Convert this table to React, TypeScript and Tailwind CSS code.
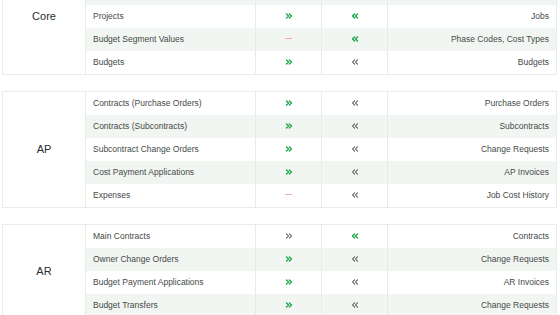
import React from "react";

type Dir = "on" | "off" | "none" | "blank";
type Row = { name: string; to: Dir; from: Dir; target: string };
type Section = { label: string; rows: Row[] };

const sections: Section[] = [
  {
    label: "Core",
    rows: [
      // rows scrolled above the visible area
      { name: "", to: "blank", from: "blank", target: "" },
      { name: "", to: "blank", from: "blank", target: "" },
      { name: "Projects", to: "on", from: "on", target: "Jobs" },
      { name: "Budget Segment Values", to: "none", from: "on", target: "Phase Codes, Cost Types" },
      { name: "Budgets", to: "on", from: "off", target: "Budgets" },
    ],
  },
  {
    label: "AP",
    rows: [
      { name: "Contracts (Purchase Orders)", to: "on", from: "off", target: "Purchase Orders" },
      { name: "Contracts (Subcontracts)", to: "on", from: "off", target: "Subcontracts" },
      { name: "Subcontract Change Orders", to: "on", from: "off", target: "Change Requests" },
      { name: "Cost Payment Applications", to: "on", from: "off", target: "AP Invoices" },
      { name: "Expenses", to: "none", from: "off", target: "Job Cost History" },
    ],
  },
  {
    label: "AR",
    rows: [
      { name: "Main Contracts", to: "off", from: "on", target: "Contracts" },
      { name: "Owner Change Orders", to: "on", from: "off", target: "Change Requests" },
      { name: "Budget Payment Applications", to: "on", from: "off", target: "AR Invoices" },
      { name: "Budget Transfers", to: "on", from: "off", target: "Change Requests" },
    ],
  },
];

function Chevrons({ state, left }: { state: Dir; left?: boolean }) {
  if (state === "blank") return null;
  if (state === "none") return <div className="w-[7px] h-px -mt-[3px] bg-[#f5aca4]" />;
  const on = state === "on";
  return (
    <svg
      width="10"
      height="10"
      viewBox="0 0 24 24"
      fill="none"
      stroke={on ? "#1fa84a" : "#4f5553"}
      strokeWidth={on ? 3.4 : 2.5}
      strokeLinecap="round"
      strokeLinejoin="round"
      className="-mt-[2px]"
    >
      {left ? (
        <>
          <path d="m11 17-5-5 5-5" />
          <path d="m18 17-5-5 5-5" />
        </>
      ) : (
        <>
          <path d="m6 17 5-5-5-5" />
          <path d="m13 17 5-5-5-5" />
        </>
      )}
    </svg>
  );
}

export default function App() {
  return (
    <div className="w-[560px] h-[315px] overflow-hidden bg-white font-['Liberation_Sans',Arial,sans-serif]">
      <div className="mt-[-42px] ml-[2px] w-[555px] flex flex-col gap-4">
        {sections.map((s) => (
          <div key={s.label} className="flex border border-[#e8ebe8]">
            <div className="w-[83px] shrink-0 flex items-center justify-center border-r border-[#e8ebe8] text-[11px] text-[#2a2d2c]">
              {s.label}
            </div>
            <div className="flex-1 flex flex-col">
              {s.rows.map((r, i) => (
                <div
                  key={i}
                  className={`h-[23px] grid grid-cols-[169px_66px_66px_1fr] text-[8.5px] text-[#444a48] ${i % 2 === 1 ? "bg-[#f2f6f2]" : "bg-white"}`}
                >
                  <div className="flex items-center pl-[7px] whitespace-nowrap">{r.name}</div>
                  <div className="flex items-center justify-center border-l border-[#e8ebe8]">
                    <Chevrons state={r.to} />
                  </div>
                  <div className="flex items-center justify-center border-l border-[#e8ebe8]">
                    <Chevrons state={r.from} left />
                  </div>
                  <div className="flex items-center justify-end pr-[7px] border-l border-[#e8ebe8] whitespace-nowrap">
                    {r.target}
                  </div>
                </div>
              ))}
            </div>
          </div>
        ))}
      </div>
    </div>
  );
}
